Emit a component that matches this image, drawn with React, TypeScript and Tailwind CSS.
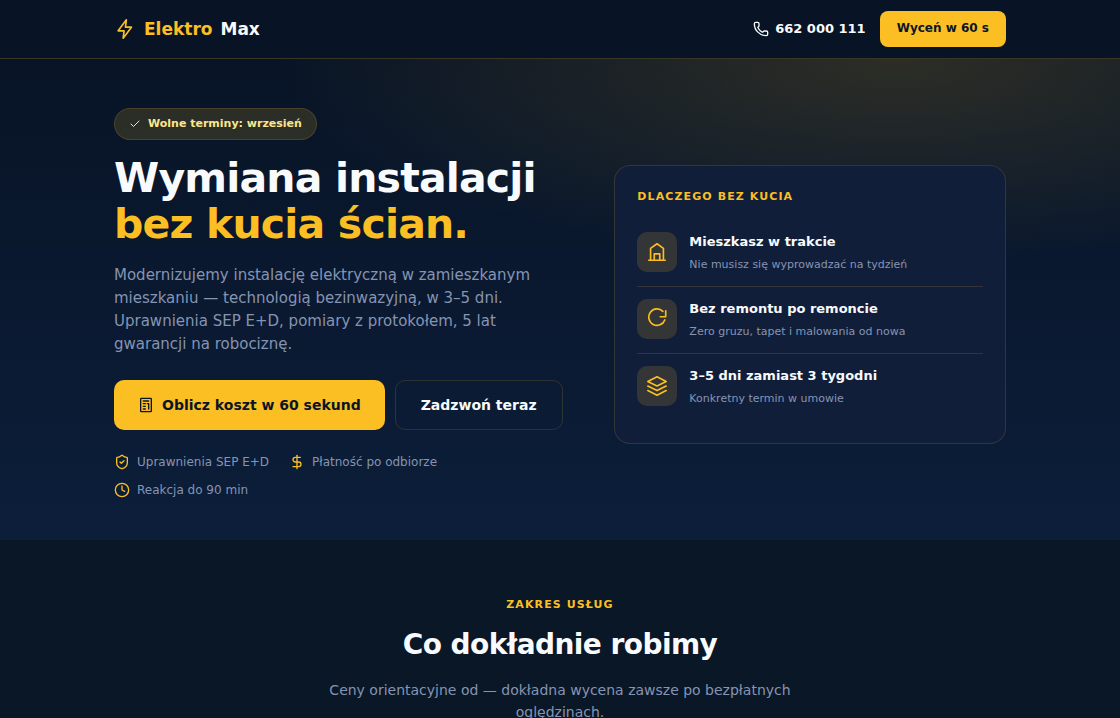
import type { ReactNode } from "react";
import { Clock, DollarSign, Phone, ShieldCheck } from "lucide-react";

function Icon({ size, stroke = 2, className, children }: { size: number; stroke?: number; className?: string; children: ReactNode }) {
  return (
    <svg
      width={size}
      height={size}
      viewBox="0 0 24 24"
      fill="none"
      stroke="currentColor"
      strokeWidth={stroke}
      strokeLinecap="round"
      strokeLinejoin="round"
      className={className}
      aria-hidden="true"
    >
      {children}
    </svg>
  );
}

const reasons = [
  {
    title: "Mieszkasz w trakcie",
    text: "Nie musisz się wyprowadzać na tydzień",
    icon: <path d="M3 21h18M5 21V8l7-5 7 5v13M9 21v-7h6v7" />,
  },
  {
    title: "Bez remontu po remoncie",
    text: "Zero gruzu, tapet i malowania od nowa",
    icon: <path d="M20.5 13a9 9 0 1 1-2.1-9.4M21.5 3v6.5h-6" />,
  },
  {
    title: "3–5 dni zamiast 3 tygodni",
    text: "Konkretny termin w umowie",
    icon: <path d="M12 2L2 7l10 5 10-5-10-5zM2 17l10 5 10-5M2 12l10 5 10-5" />,
  },
];

function Header() {
  return (
    <header className="border-b border-[#fbbf24]/20 bg-[#081426]">
      <div className="mx-auto flex h-[58px] max-w-[940px] items-center justify-between px-6">
        <a href="#" className="flex items-center gap-2 text-[17px] leading-7 font-bold">
          <Icon size={22} stroke={1.8} className="text-[#fbbf24]">
            <path d="M13.5 2L4.5 14H11l-1 8 9-12h-6.5z" />
          </Icon>
          <span className="flex gap-2">
            <span className="text-[#fbbf24]">Elektro</span>
            <span>Max</span>
          </span>
        </a>
        <div className="flex items-center gap-3.5">
          <a href="tel:662000111" className="flex items-center gap-1.5 text-[13px] font-bold">
            <Phone size={16} strokeWidth={2} />
            662 000 111
          </a>
          <button className="h-9 rounded-lg bg-[#fbbf24] px-[17px] pb-0.5 text-xs font-bold text-[#0a1628]">
            Wyceń w 60 s
          </button>
        </div>
      </div>
    </header>
  );
}

function Hero() {
  return (
    <section className="bg-[radial-gradient(ellipse_80%_60%_at_80%_0%,rgba(251,191,36,0.15),transparent_70%),linear-gradient(180deg,#081426,#0c1e3a)]">
      <div className="mx-auto grid max-w-[940px] items-center gap-[50px] px-6 pt-[49px] pb-10 md:grid-cols-[1.15fr_1fr]">
        <div>
          <p className="inline-flex h-8 items-center gap-[7px] rounded-full border border-[#fbbf24]/15 bg-[#fbbf24]/15 px-3.5 text-[11px] font-bold text-[#fde68a]">
            <Icon size={12}>
              <path d="M20 6L9 17l-5-5" />
            </Icon>
            Wolne terminy: wrzesień
          </p>
          <h1 className="mt-[15px] text-[41px] leading-[46px] font-bold tracking-[-0.02em]">
            Wymiana instalacji
            <br />
            <span className="text-[#fbbf24]">bez kucia ścian.</span>
          </h1>
          <p className="mt-[17px] text-[15px] leading-[23px] text-[#8594b2]">
            Modernizujemy instalację elektryczną w zamieszkanym mieszkaniu — technologią bezinwazyjną, w 3–5 dni.
            Uprawnienia SEP E+D, pomiary z protokołem, 5 lat gwarancji na robociznę.
          </p>
          <div className="mt-6 flex gap-2.5">
            <button className="flex h-[50px] items-center gap-2 rounded-[10px] bg-[#fbbf24] px-6 text-sm font-bold whitespace-nowrap text-[#0a1628]">
              <Icon size={16}>
                <rect x="4" y="2" width="16" height="20" rx="1" />
                <path d="M8 6h8M8 10h3M8 14h3M8 18h3M14 10h2v8" />
              </Icon>
              Oblicz koszt w 60 sekund
            </button>
            <button className="h-[50px] rounded-[10px] border border-[#fbbf24]/15 px-[25px] text-sm font-bold whitespace-nowrap">
              Zadzwoń teraz
            </button>
          </div>
          <ul className="mt-[22px] flex flex-wrap gap-x-5 gap-y-2 text-xs leading-5 text-[#8594b2]">
            <li className="flex items-center gap-[7px]">
              <ShieldCheck size={16} className="text-[#fbbf24]" />
              Uprawnienia SEP E+D
            </li>
            <li className="flex items-center gap-[7px]">
              <DollarSign size={16} className="text-[#fbbf24]" />
              Płatność po odbiorze
            </li>
            <li className="flex items-center gap-[7px]">
              <Clock size={16} className="text-[#fbbf24]" />
              Reakcja do 90 min
            </li>
          </ul>
        </div>
        <aside className="rounded-2xl border border-[#fbbf24]/15 bg-[#111e3a] px-[22px] pt-6 pb-[23px]">
          <h2 className="text-[11px] leading-[14px] font-bold tracking-widest text-[#fbbf24]">DLACZEGO BEZ KUCIA</h2>
          <ul className="mt-4 divide-y divide-[#fbbf24]/15">
            {reasons.map((reason) => (
              <li key={reason.title} className="flex gap-3 py-3">
                <div className="flex size-10 shrink-0 items-center justify-center rounded-[10px] bg-[#fbbf24]/15 text-[#fbbf24]">
                  <Icon size={22} stroke={1.8}>{reason.icon}</Icon>
                </div>
                <div>
                  <h3 className="text-[13px] leading-5 font-bold">{reason.title}</h3>
                  <p className="mt-1 text-[11px] leading-[18px] text-[#8594b2]">{reason.text}</p>
                </div>
              </li>
            ))}
          </ul>
        </aside>
      </div>
    </section>
  );
}

function Services() {
  return (
    <section className="bg-[#0a1726] px-6 pt-14 pb-20 text-center">
      <p className="text-[11px] leading-[18px] font-bold tracking-widest text-[#fbbf24]">ZAKRES USŁUG</p>
      <h2 className="mt-[13px] text-[28px] leading-9 font-bold tracking-[-0.02em]">Co dokładnie robimy</h2>
      <p className="mx-auto mt-4 max-w-[500px] text-sm leading-[22px] text-[#8594b2]">
        Ceny orientacyjne od — dokładna wycena zawsze po bezpłatnych oględzinach.
      </p>
    </section>
  );
}

export default function App() {
  return (
    <div className="min-h-screen bg-[#0a1726] font-['DejaVu_Sans',sans-serif] text-[#f8fafc]">
      <Header />
      <Hero />
      <Services />
    </div>
  );
}
